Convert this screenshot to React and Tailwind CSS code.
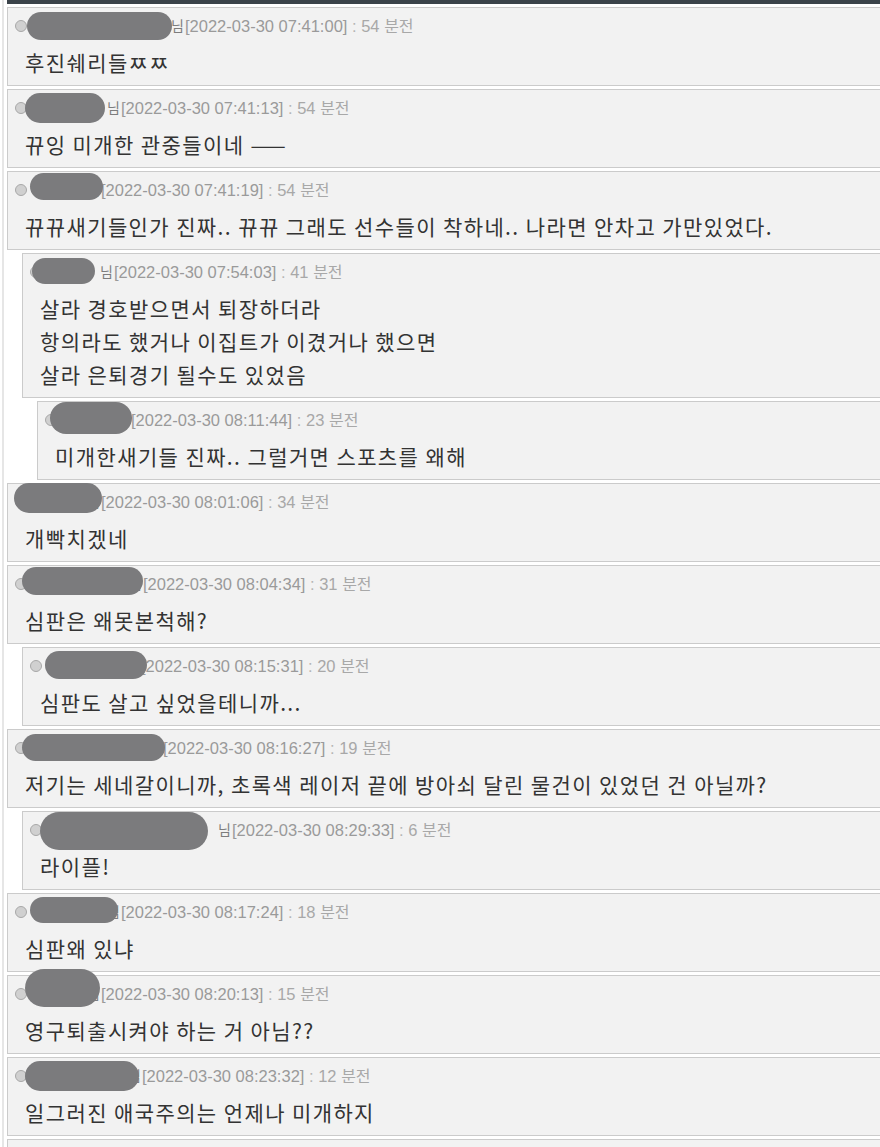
import React from 'react';

// comment thread rows; blob = redaction mark over the nickname
const comments = [
  { depth: 0, date: '2022-03-30 07:41:00', ago: '54', gap: 144, blob: [20, 5, 145, 28], lines: ['후진쉐리들ㅉㅉ'] },
  { depth: 0, date: '2022-03-30 07:41:13', ago: '54', gap: 80, blob: [18, 4, 80, 30], lines: ['뀨잉 미개한 관중들이네 ——'] },
  { depth: 0, date: '2022-03-30 07:41:19', ago: '54', gap: 60, blob: [23, 2, 73, 27], lines: ['뀨뀨새기들인가 진짜.. 뀨뀨 그래도 선수들이 착하네.. 나라면 안차고 가만있었다.'] },
  {
    depth: 1, date: '2022-03-30 07:54:03', ago: '41', gap: 58, blob: [10, 5, 63, 26],
    lines: ['살라 경호받으면서 퇴장하더라', '항의라도 했거나 이집트가 이겼거나 했으면', '살라 은퇴경기 될수도 있었음'],
  },
  { depth: 2, date: '2022-03-30 08:11:44', ago: '23', gap: 60, blob: [13, 1, 82, 32], lines: ['미개한새기들 진짜.. 그럴거면 스포츠를 왜해'] },
  { depth: 0, date: '2022-03-30 08:01:06', ago: '34', gap: 60, blob: [7, 0, 88, 30], lines: ['개빡치겠네'] },
  { depth: 0, date: '2022-03-30 08:04:34', ago: '31', gap: 102, blob: [15, 2, 121, 28], lines: ['심판은 왜못본척해?'] },
  { depth: 1, date: '2022-03-30 08:15:31', ago: '20', gap: 85, blob: [23, 4, 102, 28], lines: ['심판도 살고 싶었을테니까...'] },
  { depth: 0, date: '2022-03-30 08:16:27', ago: '19', gap: 122, blob: [15, 5, 143, 27], lines: ['저기는 세네갈이니까, 초록색 레이저 끝에 방아쇠 달린 물건이 있었던 건 아닐까?'] },
  { depth: 1, date: '2022-03-30 08:29:33', ago: '6', gap: 176, blob: [18, 1, 168, 38], lines: ['라이플!'] },
  { depth: 0, date: '2022-03-30 08:17:24', ago: '18', gap: 80, blob: [23, 4, 88, 26], lines: ['심판왜 있냐'] },
  { depth: 0, date: '2022-03-30 08:20:13', ago: '15', gap: 60, blob: [18, -6, 75, 38], lines: ['영구퇴출시켜야 하는 거 아님??'] },
  { depth: 0, date: '2022-03-30 08:23:32', ago: '12', gap: 101, blob: [18, 4, 114, 30], lines: ['일그러진 애국주의는 언제나 미개하지'] },
];

const indent = ['ml-0', 'ml-[15px]', 'ml-[30px]'];

const Comment = ({ c }) => (
  <div className={`${indent[c.depth]} relative border border-[#cbcbcb] bg-[#f2f2f2] pt-[8px] pl-[7px] pb-[6px]`}>
    <div className="flex items-center h-[20px] text-[16.5px] text-[#9a9a9a] font-['Liberation_Sans','Noto_Sans_CJK_KR',sans-serif] whitespace-nowrap">
      <span className="w-[12px] h-[12px] rounded-full bg-[#d0d0d0] border border-[#a8a8a8] shrink-0" />
      <span className="shrink-0" style={{ width: c.gap }} />
      <span className="w-[14px] shrink-0 text-[14px] text-[#7d7d7d]">님</span>
      <span>[{c.date}]</span>
      <span className="text-[#b5b5b5]">&nbsp;:&nbsp;</span>
      <span className="text-[#a8a8a8]">{c.ago} <span className="text-[16px]">분전</span></span>
    </div>
    <div className="mt-[10px] pl-[10px] text-[21px] tracking-[1.4px] leading-[33px] text-[#333] font-['Noto_Sans_CJK_KR','Liberation_Sans',sans-serif]">
      {c.lines.map((l, i) => (
        <div key={i} className="whitespace-nowrap">{l}</div>
      ))}
    </div>
    {/* redaction blob over the nickname */}
    <div
      className="absolute rounded-full bg-[#7b7b7d]"
      style={{ left: c.blob[0] - 1, top: c.blob[1] - 1, width: c.blob[2], height: c.blob[3] }}
    />
  </div>
);

const App = () => {
  return (
    <div className="w-[880px] h-[1147px] overflow-hidden bg-white flex">
      <div className="w-[7px] shrink-0">
        <div className="ml-[2px] w-[2px] h-full bg-[#e6e6e6]" />
      </div>
      <div className="w-[900px] shrink-0">
        <div className="h-[4px] bg-[#3b434a]" />
        <div className="mt-[3px] flex flex-col gap-[3px]">
          {comments.map((c, i) => (
            <Comment key={i} c={c} />
          ))}
          {/* next comment, cut off by the window */}
          <div className="h-[79px] border border-[#cbcbcb] bg-[#f2f2f2]" />
        </div>
      </div>
    </div>
  );
};

export default App;
